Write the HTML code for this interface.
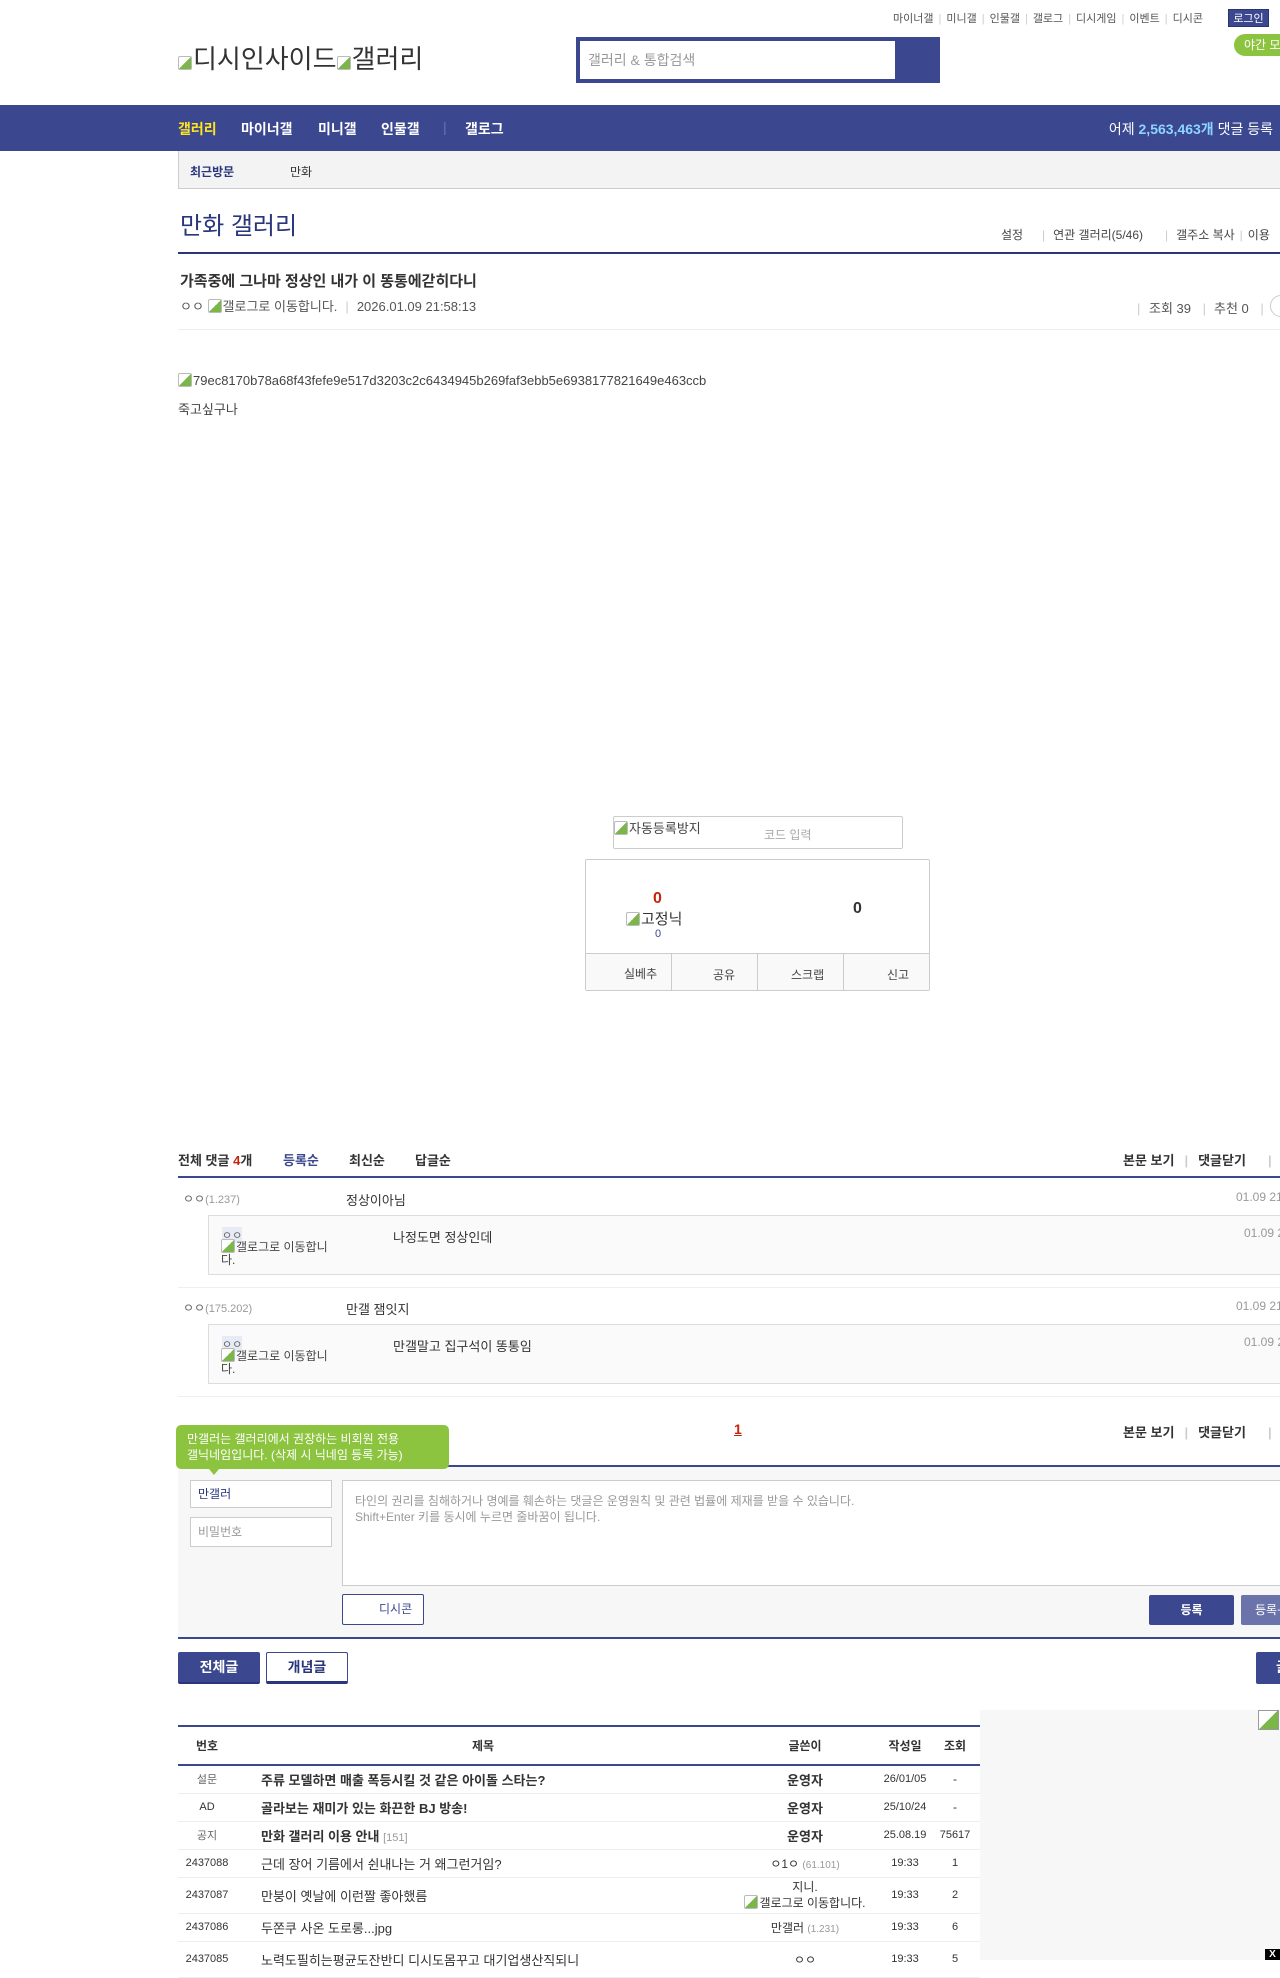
<!DOCTYPE html>
<html><head><meta charset="utf-8"><style>
*{margin:0;padding:0;box-sizing:border-box}
body{width:1280px;height:1960px;overflow:hidden;position:relative;background:#fff;font-family:"Liberation Sans","Noto Sans CJK KR",sans-serif;color:#333;font-size:12px}
.a{position:absolute;white-space:nowrap}
.nv{background:#3b4890}
.sep{color:#ccc;margin:0 5px}
.img{display:inline-block;width:14px;height:14px;border:1px solid #bbb;border-radius:2px;background:linear-gradient(135deg,#fff 50%,#7ab648 50%);vertical-align:-2px;margin-right:1px}
table{border-collapse:collapse}
td{height:28px;border-bottom:1px solid #eee;font-size:12px;text-align:center}
.nav{position:absolute;top:119px;font-size:14px;font-weight:bold;color:#fff}
</style></head><body>
<div class="a" style="left:893px;top:10px;font-size:11px;color:#555">마이너갤<span class="sep">|</span>미니갤<span class="sep">|</span>인물갤<span class="sep">|</span>갤로그<span class="sep">|</span>디시게임<span class="sep">|</span>이벤트<span class="sep">|</span>디시콘</div>
<div class="a nv" style="left:1228px;top:9px;width:41px;height:18px;color:#fff;font-size:11px;text-align:center;line-height:18px;border:1px solid #2a3570">로그인</div>
<div class="a" style="left:1234px;top:34px;width:60px;height:22px;border-radius:11px;background:#8cc43f;color:#fff;font-size:12px;line-height:22px;padding-left:10px">야간 모드</div>
<div class="a" style="left:178px;top:39px;font-size:26px;color:#333"><span class="img"></span>디시인사이드<span class="img"></span>갤러리</div>
<div class="a nv" style="left:576px;top:37px;width:364px;height:46px"></div>
<div class="a" style="left:580px;top:41px;width:315px;height:38px;background:#fff;color:#999;font-size:14px;line-height:38px;padding-left:8px">갤러리 &amp; 통합검색</div>
<div class="a nv" style="left:0;top:105px;width:1280px;height:46px"></div>
<div class="nav" style="left:178px;color:#ffe51c">갤러리</div>
<div class="nav" style="left:241px">마이너갤</div>
<div class="nav" style="left:318px">미니갤</div>
<div class="nav" style="left:381px">인물갤</div>
<div class="nav" style="left:443px;color:#6a76b0;font-weight:normal">|</div>
<div class="nav" style="left:465px">갤로그</div>
<div class="a" style="left:1095px;top:119px;width:178px;text-align:right;font-size:14px;color:#fff">어제 <b style="color:#8ed4ff">2,563,463개</b> 댓글 등록</div>
<div class="a" style="left:178px;top:151px;width:1102px;height:38px;background:#f3f3f3;border-left:1px solid #ccc;border-bottom:1px solid #ccc"></div>
<div class="a" style="left:190px;top:163px;font-size:12px;font-weight:bold;color:#29367c">최근방문</div>
<div class="a" style="left:290px;top:163px;font-size:12px;color:#333">만화</div>
<div class="a" style="left:180px;top:206px;font-size:24px;color:#29367c">만화 갤러리</div>
<div class="a" style="left:1001px;top:226px;font-size:12px;color:#444">설정</div>
<div class="a" style="left:1042px;top:226px;font-size:12px;color:#444"><span class="sep" style="margin:0 8px 0 0">|</span>연관 갤러리(5/46)</div>
<div class="a" style="left:1165px;top:226px;font-size:12px;color:#444"><span class="sep" style="margin:0 8px 0 0">|</span>갤주소 복사<span class="sep">|</span>이용</div>
<div class="a" style="left:178px;top:252px;width:1102px;height:2px;background:#29367c"></div>
<div class="a" style="left:180px;top:270px;font-size:15px;font-weight:bold;color:#333">가족중에 그나마 정상인 내가 이 똥통에갇히다니</div>
<div class="a" style="left:180px;top:296px;font-size:13px;color:#555">ㅇㅇ <span class="img"></span>갤로그로 이동합니다.<span class="sep" style="margin:0 8px">|</span>2026.01.09 21:58:13</div>
<div class="a" style="left:1132px;top:298px;font-size:13px;color:#555"><span class="sep">|</span> 조회 39 <span class="sep" style="margin:0 8px">|</span>추천 0 <span class="sep" style="margin:0 8px">|</span></div>
<div class="a" style="left:1270px;top:295px;width:24px;height:22px;border:1px solid #ccc;border-radius:11px"></div>
<div class="a" style="left:178px;top:329px;width:1102px;height:1px;background:#eee"></div>
<div class="a" style="left:178px;top:373px;font-size:13px;color:#444"><span class="img"></span>79ec8170b78a68f43fefe9e517d3203c2c6434945b269faf3ebb5e6938177821649e463ccb</div>
<div class="a" style="left:178px;top:399px;font-size:13px;color:#444">죽고싶구나</div>
<div class="a" style="left:613px;top:816px;width:290px;height:33px;border:1px solid #ccc;border-radius:2px"></div>
<div class="a" style="left:614px;top:818px;font-size:13px;color:#444"><span class="img"></span>자동등록방지</div>
<div class="a" style="left:764px;top:826px;font-size:12px;color:#aaa">코드 입력</div>
<div class="a" style="left:585px;top:859px;width:345px;height:132px;border:1px solid #ccc;border-radius:2px"></div>
<div class="a" style="left:653px;top:890px;font-size:16px;font-weight:bold;color:#c4250c">0</div>
<div class="a" style="left:626px;top:908px;font-size:15px;color:#333"><span class="img"></span>고정닉</div>
<div class="a" style="left:655px;top:928px;font-size:11px;color:#3b4890">0</div>
<div class="a" style="left:853px;top:900px;font-size:16px;font-weight:bold;color:#333">0</div>
<div class="a" style="left:586px;top:953px;width:343px;height:37px;background:#f9f9f9;border-top:1px solid #ccc"></div>
<div class="a" style="left:671px;top:953px;width:1px;height:37px;background:#ccc"></div>
<div class="a" style="left:757px;top:953px;width:1px;height:37px;background:#ccc"></div>
<div class="a" style="left:843px;top:953px;width:1px;height:37px;background:#ccc"></div>
<div class="a" style="left:624px;top:965px;font-size:12px;color:#444">실베추</div>
<div class="a" style="left:713px;top:966px;font-size:12px;color:#444">공유</div>
<div class="a" style="left:791px;top:966px;font-size:12px;color:#444">스크랩</div>
<div class="a" style="left:887px;top:966px;font-size:12px;color:#444">신고</div>
<div class="a" style="left:178px;top:1150px;font-size:13px;font-weight:bold;color:#333">전체 댓글 <span style="color:#c4250c">4</span>개</div>
<div class="a" style="left:283px;top:1150px;font-size:13px;font-weight:bold;color:#3b4890">등록순</div>
<div class="a" style="left:349px;top:1150px;font-size:13px;font-weight:bold;color:#333">최신순</div>
<div class="a" style="left:415px;top:1150px;font-size:13px;font-weight:bold;color:#333">답글순</div>
<div class="a" style="left:1123px;top:1150px;font-size:13px;font-weight:bold;color:#333">본문 보기<span class="sep" style="margin:0 10px">|</span>댓글닫기<span class="sep" style="margin:0 0 0 22px">|</span></div>
<div class="a" style="left:178px;top:1176px;width:1102px;height:2px;background:#3b4890"></div>
<div class="a" style="left:183px;top:1190px;font-size:12px;color:#666">ㅇㅇ<span style="color:#999;font-size:11px">(1.237)</span></div>
<div class="a" style="left:346px;top:1190px;font-size:13px;color:#333">정상이아님</div>
<div class="a" style="left:1236px;top:1190px;font-size:12px;color:#999">01.09 21:58</div>
<div class="a" style="left:208px;top:1215px;width:1080px;height:60px;background:#fafafa;border:1px solid #ddd"></div>
<div class="a" style="left:222px;top:1227px;font-size:11px;color:#666;background:#e6ebf5">ㅇㅇ</div>
<div class="a" style="left:221px;top:1239px;font-size:12px;color:#444;line-height:13px;white-space:normal;width:120px"><span class="img"></span>갤로그로 이동합니다.</div>
<div class="a" style="left:393px;top:1227px;font-size:13px;color:#333">나정도면 정상인데</div>
<div class="a" style="left:1244px;top:1226px;font-size:12px;color:#999">01.09 21:59</div>
<div class="a" style="left:178px;top:1287px;width:1102px;height:1px;background:#eee"></div>
<div class="a" style="left:183px;top:1299px;font-size:12px;color:#666">ㅇㅇ<span style="color:#999;font-size:11px">(175.202)</span></div>
<div class="a" style="left:346px;top:1299px;font-size:13px;color:#333">만갤 잼잇지</div>
<div class="a" style="left:1236px;top:1299px;font-size:12px;color:#999">01.09 21:59</div>
<div class="a" style="left:208px;top:1324px;width:1080px;height:60px;background:#fafafa;border:1px solid #ddd"></div>
<div class="a" style="left:222px;top:1336px;font-size:11px;color:#666;background:#e6ebf5">ㅇㅇ</div>
<div class="a" style="left:221px;top:1348px;font-size:12px;color:#444;line-height:13px;white-space:normal;width:120px"><span class="img"></span>갤로그로 이동합니다.</div>
<div class="a" style="left:393px;top:1336px;font-size:13px;color:#333">만갤말고 집구석이 똥통임</div>
<div class="a" style="left:1244px;top:1335px;font-size:12px;color:#999">01.09 21:59</div>
<div class="a" style="left:178px;top:1396px;width:1102px;height:1px;background:#eee"></div>
<div class="a" style="left:734px;top:1421px;font-size:14px;font-weight:bold;color:#c4250c;text-decoration:underline">1</div>
<div class="a" style="left:1123px;top:1422px;font-size:13px;font-weight:bold;color:#333">본문 보기<span class="sep" style="margin:0 10px">|</span>댓글닫기<span class="sep" style="margin:0 0 0 22px">|</span></div>
<div class="a" style="left:178px;top:1465px;width:1102px;height:2px;background:#3b4890"></div>
<div class="a" style="left:178px;top:1467px;width:1102px;height:171px;background:#f7f7f7"></div>
<div class="a" style="left:176px;top:1425px;width:273px;height:44px;background:#8cc43f;border-radius:5px;color:#fff;font-size:12px;line-height:16px;padding:6px 11px">만갤러는 갤러리에서 권장하는 비회원 전용<br>갤닉네임입니다. (삭제 시 닉네임 등록 가능)</div>
<div class="a" style="left:209px;top:1469px;width:0;height:0;border-left:5px solid transparent;border-right:5px solid transparent;border-top:6px solid #8cc43f"></div>
<div class="a" style="left:190px;top:1480px;width:142px;height:28px;background:#fff;border:1px solid #ccc;font-size:12px;color:#29367c;line-height:26px;padding-left:7px">만갤러</div>
<div class="a" style="left:190px;top:1517px;width:142px;height:30px;background:#fff;border:1px solid #ccc;font-size:12px;color:#999;line-height:28px;padding-left:7px">비밀번호</div>
<div class="a" style="left:342px;top:1480px;width:950px;height:106px;background:#fff;border:1px solid #ccc;font-size:12px;color:#999;line-height:16px;padding:12px 12px">타인의 권리를 침해하거나 명예를 훼손하는 댓글은 운영원칙 및 관련 법률에 제재를 받을 수 있습니다.<br>Shift+Enter 키를 동시에 누르면 줄바꿈이 됩니다.</div>
<div class="a" style="left:342px;top:1594px;width:82px;height:31px;background:#fff;border:1px solid #3b4890;border-radius:2px;font-size:12px;color:#3b4890;line-height:29px;padding-left:36px">디시콘</div>
<div class="a nv" style="left:1149px;top:1595px;width:85px;height:30px;border-radius:2px;color:#fff;font-size:12px;font-weight:bold;text-align:center;line-height:30px">등록</div>
<div class="a" style="left:1241px;top:1595px;width:60px;height:30px;border-radius:2px;background:#6a74aa;color:#fff;font-size:12px;line-height:30px;padding-left:14px">등록+추천</div>
<div class="a" style="left:178px;top:1637px;width:1102px;height:2px;background:#3b4890"></div>
<div class="a nv" style="left:178px;top:1652px;width:82px;height:32px;border-radius:2px;color:#fff;font-size:14px;font-weight:bold;text-align:center;line-height:31px;border-bottom:2px solid #29367c">전체글</div>
<div class="a" style="left:266px;top:1652px;width:82px;height:32px;border:1px solid #3b4890;border-bottom:3px solid #29367c;border-radius:2px;color:#29367c;font-size:14px;font-weight:bold;text-align:center;line-height:28px">개념글</div>
<div class="a nv" style="left:1256px;top:1652px;width:40px;height:32px;border-radius:2px;color:#fff;font-size:14px;font-weight:bold;line-height:31px;padding-left:20px">글</div>
<div class="a" style="left:980px;top:1710px;width:300px;height:250px;background:#f7f7f7"></div>
<div class="a" style="left:1258px;top:1710px;width:21px;height:20px;border:1px solid #999;background:linear-gradient(135deg,#fff 50%,#7ab648 50%)"></div>
<div class="a" style="left:178px;top:1725px;width:802px;height:2px;background:#3b4890"></div>
<table class="a" style="left:178px;top:1727px;width:802px">
<tr style="font-weight:bold;font-size:12px"><td style="width:58px;height:38px;border-bottom:2px solid #3b4890">번호</td><td style="border-bottom:2px solid #3b4890">제목</td><td style="width:150px;border-bottom:2px solid #3b4890">글쓴이</td><td style="width:50px;border-bottom:2px solid #3b4890">작성일</td><td style="width:50px;border-bottom:2px solid #3b4890">조회</td></tr>
<tr><td style="font-size:11px;color:#666">설문</td><td style="text-align:left;padding-left:25px;font-weight:bold;font-size:13px">주류 모델하면 매출 폭등시킬 것 같은 아이돌 스타는?</td><td style="font-weight:bold;font-size:13px">운영자</td><td style="font-size:11px">26/01/05</td><td>-</td></tr>
<tr><td style="font-size:11px">AD</td><td style="text-align:left;padding-left:25px;font-weight:bold;font-size:13px">골라보는 재미가 있는 화끈한 BJ 방송!</td><td style="font-weight:bold;font-size:13px">운영자</td><td style="font-size:11px">25/10/24</td><td>-</td></tr>
<tr><td style="font-size:11px;color:#666">공지</td><td style="text-align:left;padding-left:25px;font-weight:bold;font-size:13px">만화 갤러리 이용 안내 <span style="color:#999;font-weight:normal;font-size:11px">[151]</span></td><td style="font-weight:bold;font-size:13px">운영자</td><td style="font-size:11px">25.08.19</td><td style="font-size:11px">75617</td></tr>
<tr><td style="font-size:11px">2437088</td><td style="text-align:left;padding-left:25px;font-size:13px">근데 장어 기름에서 쉰내나는 거 왜그런거임?</td><td style="font-size:12px">ㅇ1ㅇ <span style="color:#999;font-size:10px">(61.101)</span></td><td style="font-size:11px">19:33</td><td style="font-size:11px">1</td></tr>
<tr><td style="font-size:11px;height:36px">2437087</td><td style="text-align:left;padding-left:25px;font-size:13px">만붕이 옛날에 이런짤 좋아했름</td><td style="font-size:12px;line-height:15px">지니.<br><span class="img"></span>갤로그로 이동합니다.</td><td style="font-size:11px">19:33</td><td style="font-size:11px">2</td></tr>
<tr><td style="font-size:11px">2437086</td><td style="text-align:left;padding-left:25px;font-size:13px">두쫀쿠 사온 도로롱...jpg</td><td style="font-size:12px">만갤러 <span style="color:#999;font-size:10px">(1.231)</span></td><td style="font-size:11px">19:33</td><td style="font-size:11px">6</td></tr>
<tr><td style="font-size:11px;height:36px">2437085</td><td style="text-align:left;padding-left:25px;font-size:13px">노력도필히는평균도잔반디 디시도몸꾸고 대기업생산직되니</td><td style="font-size:12px">ㅇㅇ</td><td style="font-size:11px">19:33</td><td style="font-size:11px">5</td></tr>
</table>
<div class="a" style="left:1265px;top:1949px;width:15px;height:11px;background:#000;color:#fff;font-size:10px;font-weight:bold;text-align:center;line-height:11px">X</div>
</body></html>
